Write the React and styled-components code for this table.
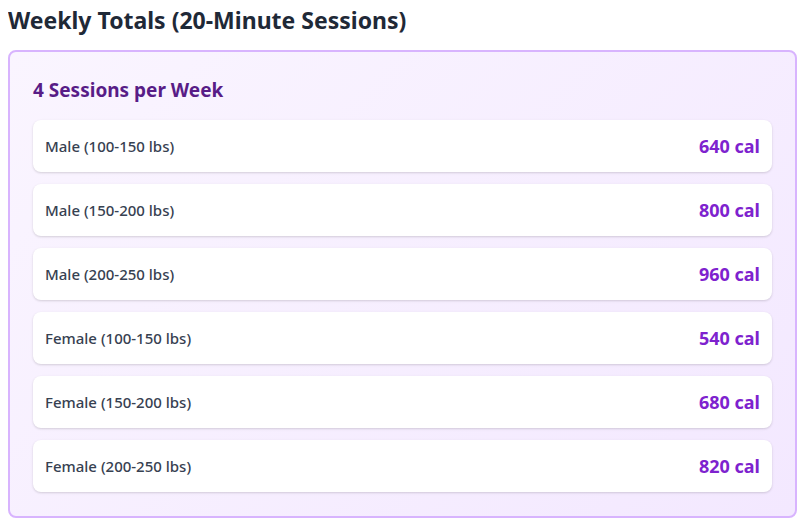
import { styled, createGlobalStyle } from "styled-components";

const GlobalStyle = createGlobalStyle`
    body {
        margin: 8px;
        background: #ffffff;
        font-family: "Noto Sans", "Open Sans", sans-serif;
    }
`;

const rows = [
    { label: "Male (100-150 lbs)", value: "640 cal" },
    { label: "Male (150-200 lbs)", value: "800 cal" },
    { label: "Male (200-250 lbs)", value: "960 cal" },
    { label: "Female (100-150 lbs)", value: "540 cal" },
    { label: "Female (150-200 lbs)", value: "680 cal" },
    { label: "Female (200-250 lbs)", value: "820 cal" },
];

const App = () => {
    return (
        <>
            <GlobalStyle />
            <Title>Weekly Totals (20-Minute Sessions)</Title>
            <Card>
                <CardHeading>4 Sessions per Week</CardHeading>
                <List>
                    {rows.map((row) => (
                        <Row key={row.label}>
                            <Label>{row.label}</Label>
                            <Value>{row.value}</Value>
                        </Row>
                    ))}
                </List>
            </Card>
        </>
    );
};

const Title = styled.h2`
    margin: -2px 0 16px;
    font-size: 23px;
    line-height: 28px;
    font-weight: 700;
    color: #1f2937;
`;

const Card = styled.div`
    margin-right: 2px;
    border: 2px solid #d8b4fe;
    border-radius: 8px;
    padding: 24px 23px;
    background: linear-gradient(135deg, #faf5ff, #f3e8ff);
`;

const CardHeading = styled.h3`
    margin: 0 0 16px;
    font-size: 19px;
    line-height: 28px;
    font-weight: 700;
    color: #581c87;
`;

const List = styled.div`
    display: flex;
    flex-direction: column;
    gap: 12px;
`;

const Row = styled.div`
    height: 52px;
    box-sizing: border-box;
    padding: 0 12px;
    display: flex;
    align-items: center;
    justify-content: space-between;
    background: #ffffff;
    border-radius: 8px;
    box-shadow: 0 1px 3px rgba(0, 0, 0, 0.1), 0 1px 2px rgba(0, 0, 0, 0.06);
`;

const Label = styled.span`
    font-size: 15px;
    font-weight: 500;
    color: #374151;
`;

const Value = styled.span`
    font-size: 18px;
    font-weight: 700;
    color: #7e22ce;
`;

export default App;
